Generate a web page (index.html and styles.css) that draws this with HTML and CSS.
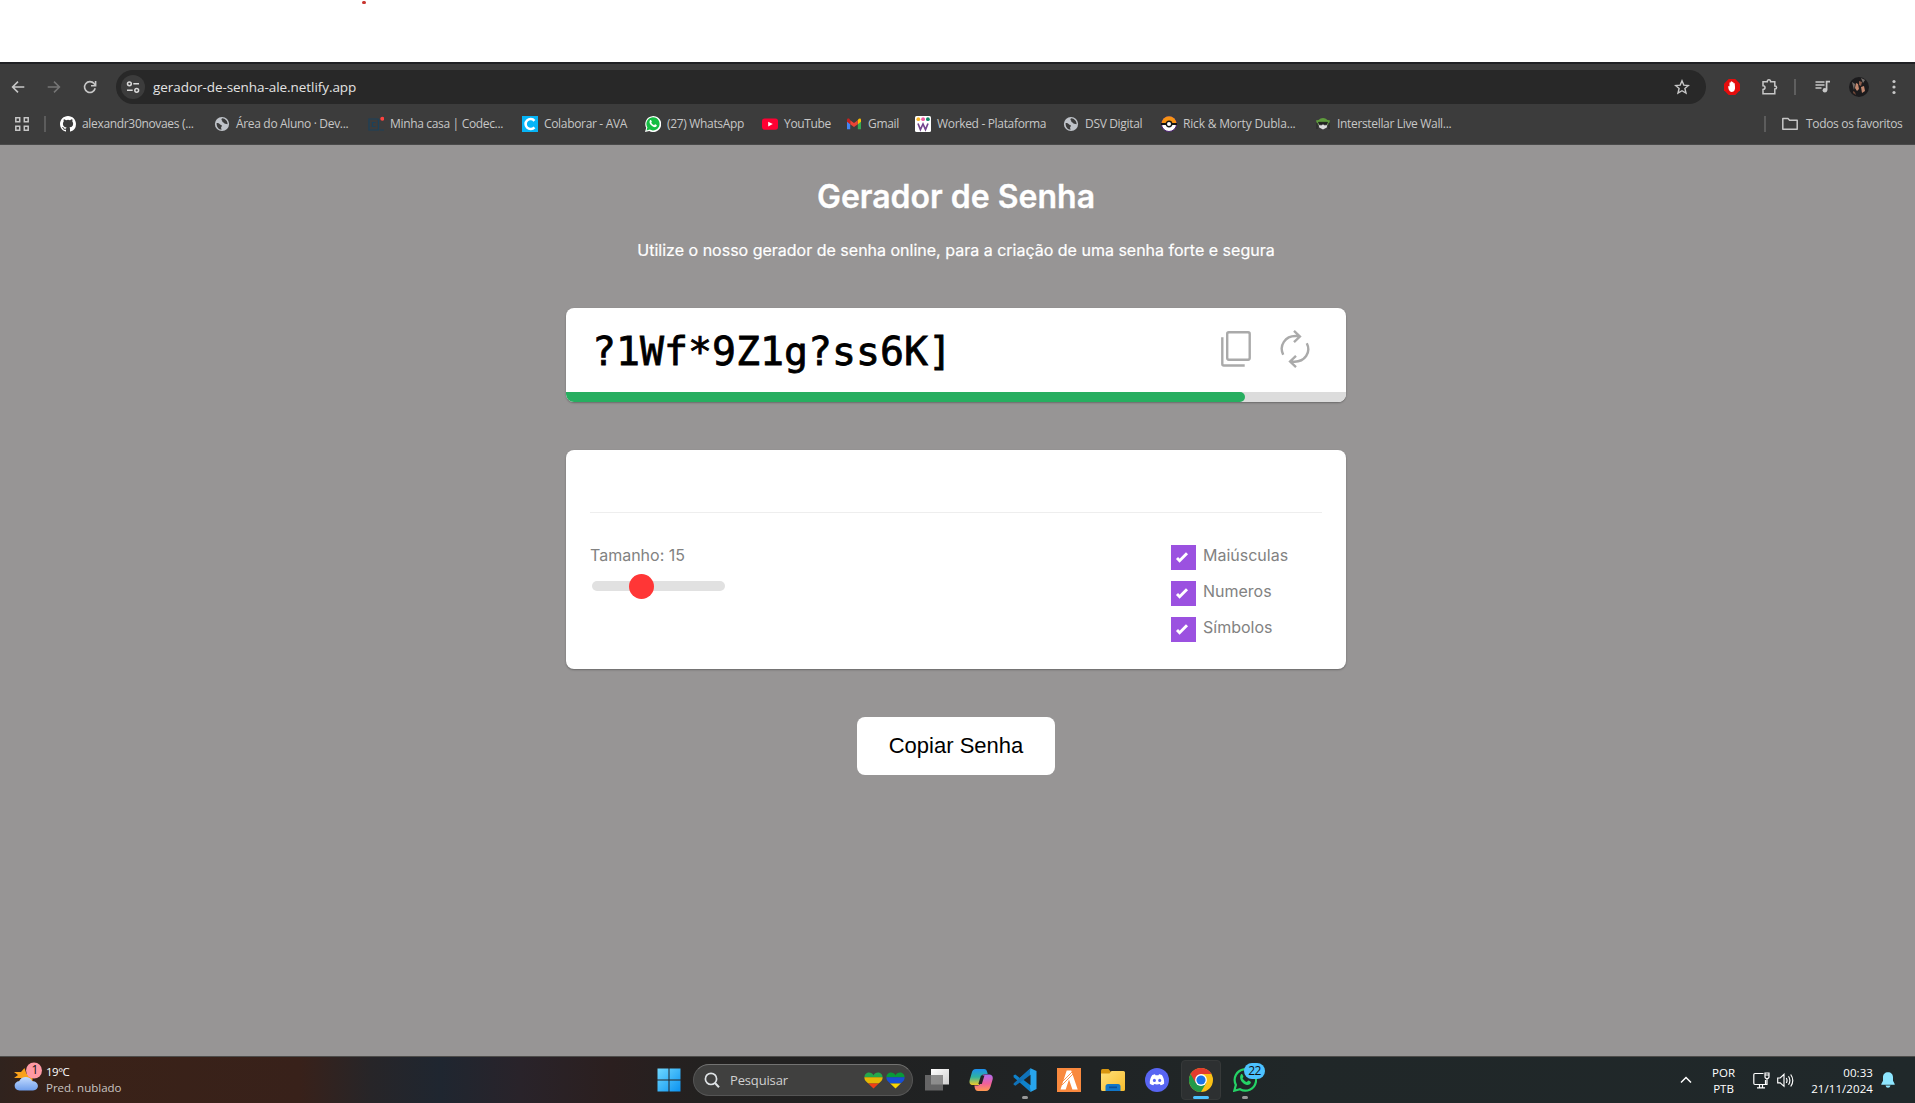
FILE: index.html
```html
<!DOCTYPE html>
<html lang="pt-BR">
<head>
<meta charset="utf-8">
<title>Gerador de Senha</title>
<link rel="stylesheet" href="styles.css">
</head>
<body>
<svg class="defs" aria-hidden="true">
  <defs>
    <linearGradient id="gWin" x1="0" y1="0" x2="1" y2="1"><stop offset="0" stop-color="#6fd8ff"/><stop offset="1" stop-color="#0a92f0"/></linearGradient>
    <linearGradient id="gCloud" x1="0" y1="0" x2="0" y2="1"><stop offset="0" stop-color="#c4dcff"/><stop offset="1" stop-color="#6f9eec"/></linearGradient>
    <linearGradient id="gFolder" x1="0" y1="0" x2="1" y2="1"><stop offset="0" stop-color="#ffe07a"/><stop offset="1" stop-color="#f8bd2c"/></linearGradient>
    <linearGradient id="gCopA" x1="0" y1="0" x2="0" y2="1"><stop offset="0" stop-color="#1c8ff0"/><stop offset=".5" stop-color="#2fb3a0"/><stop offset="1" stop-color="#f0c928"/></linearGradient>
    <linearGradient id="gCopB" x1="0" y1="0" x2="0" y2="1"><stop offset="0" stop-color="#b06cf0"/><stop offset=".55" stop-color="#f0609a"/><stop offset="1" stop-color="#ff9a50"/></linearGradient>
    <linearGradient id="gTask" x1="0" y1="0" x2="1" y2="1"><stop offset="0" stop-color="#ffffff"/><stop offset="1" stop-color="#cfcfcf"/></linearGradient>
    <symbol id="globe" viewBox="0 0 16 16"><circle cx="8" cy="8" r="7.1" fill="#bfc3c9"/><path d="M2.6 6.9c1.6 0 2.7.3 3.3 1.3.6.9 1.9.6 2 1.6.1.9-.9 1-.8 2 .1.8.3 1.3.5 1.9-2.9-.2-5.2-2.7-5-6.8zM8.2 2.3c-.9.7-1 1.8-.2 2.3.7.4-.1 1.4.9 1.7 1.1.3 1.1 1.3 2.3 1.5 1 .1 1.6.3 2.4.4.1-2.9-2.2-5.7-5.4-5.9z" fill="#3c3c3c"/></symbol>
    <clipPath id="heartClip"><path d="M9.500 16.500 1.400 8.700C-.8 5.500.7 1.300 4 .6 6.400.2 8.500 1.300 9.500 3.200 10.500 1.300 12.600.2 15 .6 18.300 1.300 19.800 5.500 17.600 8.700z"/></clipPath>
  </defs>
</svg>

<div class="blank"><span class="mark"></span></div>

<header class="browser">
  <div class="toolbar">
    <svg class="tb-back" width="16" height="16" viewBox="0 0 16 16"><path d="M14.300 8H2.800M8 2.600 2.600 8 8 13.400" fill="none" stroke="#c7c7c7" stroke-width="1.600"/></svg>
    <svg class="tb-fwd" width="16" height="16" viewBox="0 0 16 16"><path d="M1.700 8h11.500M8 2.600 13.400 8 8 13.400" fill="none" stroke="#757575" stroke-width="1.600"/></svg>
    <svg class="tb-reload" width="16" height="16" viewBox="0 0 16 16"><path d="M13.200 9.300A5.400 5.400 0 1 1 12.100 4.600L13.600 6.200" fill="none" stroke="#c7c7c7" stroke-width="1.600"/><path d="M13.600 2v4.700H9" fill="none" stroke="#c7c7c7" stroke-width="1.600"/></svg>
    <div class="omnibox">
      <span class="site-info"><svg width="16" height="16" viewBox="0 0 16 16"><g fill="none" stroke="#d8d8d8" stroke-width="1.500"><circle cx="4.400" cy="4.800" r="1.900"/><path d="M8.300 4.800H14M2 11.300h5.700"/><circle cx="11.700" cy="11.300" r="1.900"/></g></svg></span>
      <span class="url">gerador-de-senha-ale.netlify.app</span>
      <svg class="star" width="16" height="16" viewBox="0 0 16 16"><path d="m8 1.800 1.800 4.300 4.600.4-3.500 3 1.100 4.600L8 11.700l-4 2.400 1.100-4.600-3.500-3 4.600-.4z" fill="none" stroke="#c7c7c7" stroke-width="1.400"/></svg>
    </div>
    <svg class="ext-stop" width="16" height="16" viewBox="0 0 16 16"><path d="M4.700 0h6.600L16 4.700v6.600L11.300 16H4.700L0 11.300V4.700z" fill="#e40d0d"/><path d="M4.200 7.500c0-.8 1.100-.8 1.300 0V3.900c0-.9 1.200-.9 1.200 0v-1c0-1 1.400-1 1.400 0v.5c0-.9 1.300-.9 1.300 0v1.200c0-.8 1.300-.8 1.300 0 .1 2.200.9 5.100-.2 6.700-.7 1.800-3.600 2-4.600.9-1.100-1.200-1.600-2.600-1.700-4.700z" fill="#fff"/></svg>
    <svg class="ext-puzzle" width="18" height="18" viewBox="0 0 18 18"><path d="M2 3.700h4.300c0-2.600 3.300-2.600 3.300 0h4.200V8c2.400 0 2.400 3 0 3v4.700H2v-4.200c2.700 0 2.700-3.800 0-3.800z" fill="none" stroke="#c7c7c7" stroke-width="1.500"/></svg>
    <span class="tb-sep"></span>
    <svg class="media" width="16" height="14" viewBox="0 0 16 14"><path d="M.5 2h9M.5 5h9M.5 8h6" stroke="#c7c7c7" stroke-width="1.500"/><path d="M10.700 1.700H15M11.600 1.500v8.500" stroke="#c7c7c7" stroke-width="1.700"/><circle cx="9.900" cy="10.300" r="2.300" fill="#c7c7c7"/></svg>
    <svg class="avatar" width="20" height="20" viewBox="0 0 20 20"><circle cx="10" cy="10" r="10" fill="#1c1b1d"/><path d="m3 5 3 2-1 6zM12 1l4 2-2 3z" fill="#77706c"/><path d="m7 6 2 1 1 5-2 2-2-3zM12 10l3-1 1 5-3 2z" fill="#c48970"/><path d="m10 4 3 1-1 4-2-1z" fill="#8d5c4a"/><path d="m4 14 2 1 1 3-3-2z" fill="#6a4536"/></svg>
    <svg class="dots" width="4" height="16" viewBox="0 0 4 16"><g fill="#c7c7c7"><circle cx="2" cy="2.500" r="1.600"/><circle cx="2" cy="8" r="1.600"/><circle cx="2" cy="13.500" r="1.600"/></g></svg>
  </div>
  <nav class="bookmarks">
    <svg class="apps" width="14" height="14" viewBox="0 0 14 14"><g fill="none" stroke="#c7c7c7" stroke-width="1.500"><path d="M.8.8h3.900v3.900H.8zM9.300.8h3.900v3.900H9.300zM.8 9.300h3.900v3.900H.8zM9.300 9.300h3.900v3.900H9.300z"/></g></svg>
    <span class="bm-sep"></span>
    <div class="bm-list">
      <a class="bm"><svg width="16" height="16" viewBox="0 0 16 16"><path fill="#fff" d="M8 0C3.580 0 0 3.580 0 8c0 3.540 2.290 6.530 5.470 7.590.4.070.55-.17.55-.38 0-.19-.01-.82-.01-1.490-2.010.37-2.530-.49-2.690-.94-.09-.23-.48-.94-.82-1.130-.28-.15-.68-.52-.01-.53.630-.01 1.080.58 1.230.82.720 1.210 1.870.87 2.330.66.070-.52.280-.87.510-1.070-1.780-.2-3.640-.89-3.640-3.950 0-.87.310-1.590.82-2.150-.08-.2-.36-1.020.08-2.120 0 0 .67-.21 2.200.82a7.500 7.500 0 0 1 4 0c1.530-1.040 2.200-.82 2.200-.82.440 1.100.16 1.920.08 2.120.510.56.820 1.270.82 2.150 0 3.070-1.870 3.750-3.650 3.950.290.250.540.730.540 1.480 0 1.070-.01 1.930-.01 2.200 0 .21.150.46.550.38A8 8 0 0 0 16 8c0-4.420-3.580-8-8-8z"/></svg><span>alexandr30novaes (...</span></a>
      <a class="bm"><svg width="16" height="16"><use href="#globe"/></svg><span>Área do Aluno · Dev...</span></a>
      <a class="bm"><svg width="16" height="16" viewBox="0 0 16 16"><path d="M10.500 3H1v11h9.500V3M7.500 6.500h-3v4h3M12 14h4" fill="none" stroke="#1b415b" stroke-width="1.200"/><circle cx="14.300" cy="2.800" r="2" fill="#ff4340"/></svg><span>Minha casa | Codec...</span></a>
      <a class="bm"><svg width="16" height="16" viewBox="0 0 16 16"><path d="M0 0h16v16H0z" fill="#06b4f6"/><path d="M12.400 4.800a5 5 0 1 0 0 6.500" fill="none" stroke="#fff" stroke-width="2.600"/></svg><span>Colaborar - AVA</span></a>
      <a class="bm"><svg width="16" height="16" viewBox="0 0 16 16"><path d="m0 16 1.200-4.200A8 8 0 1 1 4.300 15z" fill="#fff"/><path d="m1.500 14.500.9-3.100A6.600 6.600 0 1 1 4.700 13.600z" fill="#15bd43"/><path d="M5.100 4.100c.5-.4 1-.2 1.200.3l.5 1.100c.1.400-.4.900-.6 1.200.7 1.200 1.700 2 2.900 2.500l.9-.9c.6.100 1.200.5 1.800.9.200 1.400-1.500 2.100-2.700 1.900C6.700 10.500 3.100 7.100 5.100 4.100z" fill="#fff"/></svg><span>(27) WhatsApp</span></a>
      <a class="bm"><svg width="16" height="16" viewBox="0 0 16 16"><rect y="2.500" width="16" height="11.200" rx="2.600" fill="#ff0033"/><path d="m6.200 5.700 4.600 2.400-4.600 2.400z" fill="#fff"/></svg><span>YouTube</span></a>
      <a class="bm"><svg width="16" height="16" viewBox="0 0 16 16"><path d="M1 5v8.300h3.200V7.500z" fill="#4285f4"/><path d="M15 5v8.300h-3.200V7.500z" fill="#34a853"/><path d="M11.800 4.200v4L15 5.800V4c0-1.500-1.600-1.800-2.500-.9z" fill="#fbbc04"/><path d="M4.200 8.200v-4L8 7l3.800-2.800v4L8 11z" fill="#ea4335"/><path d="M1 4v1.800l3.200 2.400v-4L3.500 3.100C2.600 2.200 1 2.600 1 4z" fill="#c5221f"/></svg><span>Gmail</span></a>
      <a class="bm"><svg width="16" height="16" viewBox="0 0 16 16"><rect width="16" height="16" rx="1.500" fill="#fff"/><circle cx="3.300" cy="3.200" r="1.900" fill="#f8b62a"/><circle cx="8.100" cy="3.200" r="1.900" fill="#ee5aa0"/><circle cx="12.900" cy="3.200" r="1.900" fill="#138765"/><path d="m3 7.500 2.400 6L8 8l2.500 5.500 2.500-6" fill="none" stroke="#73458e" stroke-width="1.700"/></svg><span>Worked - Plataforma</span></a>
      <a class="bm"><svg width="16" height="16"><use href="#globe"/></svg><span>DSV Digital</span></a>
      <a class="bm wide"><svg width="16" height="16" viewBox="0 0 16 16"><circle cx="8" cy="8" r="7.500" fill="#fff" stroke="#4e2275"/><path d="M.5 7.800a7.500 7.500 0 0 1 15 0z" fill="#f79213"/><path d="M0 7h16v2H0z" fill="#151515"/><circle cx="8" cy="8" r="2.700" fill="#fff" stroke="#151515" stroke-width="1.400"/></svg><span>Rick &amp; Morty Dubla...</span></a>
      <a class="bm"><svg width="16" height="16" viewBox="0 0 16 16"><path d="M.8 4.500 3.500 4C6 1.200 10 1.200 12.500 4l2.700.5-2 4.500H3z" fill="#5e9b3c"/><path d="M3.500 7h9l-.7 4.500L8 13.500l-3.800-2z" fill="#ddd"/><path d="M3.500 6.300h9l-.8 2.500H9L8 7.700 7 8.800H4.300zM2 7v6M14 7v6" fill="#202020" stroke="#202020" stroke-width=".8"/></svg><span>Interstellar Live Wall...</span></a>
    </div>
    <span class="bm-sep end"></span>
    <a class="bm all"><svg width="16" height="16" viewBox="0 0 16 16"><path d="M.8 12.500v-10H6l1.600 1.700h7.600v9H.8z" fill="none" stroke="#c7c7c7" stroke-width="1.500" stroke-linejoin="round"/></svg><span>Todos os favoritos</span></a>
  </nav>
</header>

<main class="page">
  <h1>Gerador de Senha</h1>
  <p class="lead">Utilize o nosso gerador de senha online, para a criação de uma senha forte e segura</p>
  <section class="card password">
    <div class="password-row">
      <span class="password-text">?1Wf*9Z1g?ss6K]</span>
      <svg class="copy-icon" width="30" height="36" viewBox="0 0 30 36"><g fill="none" stroke="#aaa" stroke-width="2.400"><rect x="6.200" y="1.300" width="22.500" height="27.400" rx="1.600"/><path d="M1.300 6.200V33q0 1.500 1.500 1.500H23.700"/></g></svg>
      <svg class="renew-icon" width="30" height="38" viewBox="0 0 30 38"><g fill="none" stroke="#aaa" stroke-width="2.400"><path d="M3.200 24.700C-1.400 15.300 5.500 6 15.400 6h4.500M14 .9 19.900 6.500 14 12.200M26.800 13.300C31.400 22.700 24.500 31.700 14.600 31.700h-4.500M16 25.800l-5.900 5.700L16 37.100"/></g></svg>
    </div>
    <div class="meter"><div class="meter-fill" style="width:87%"></div></div>
  </section>
  <section class="card options">
    <div class="options-head"></div>
    <div class="options-body">
      <div class="size">
        <label>Tamanho: 15</label>
        <div class="slider"><span class="thumb"></span></div>
      </div>
      <div class="checks">
        <label class="check"><span class="box"><svg width="14" height="12" viewBox="0 0 14 12"><path d="m2 7 2.600 2.700L12 2.200" fill="none" stroke="#fff" stroke-width="2.900"/></svg></span>Maiúsculas</label>
        <label class="check"><span class="box"><svg width="14" height="12" viewBox="0 0 14 12"><path d="m2 7 2.600 2.700L12 2.200" fill="none" stroke="#fff" stroke-width="2.900"/></svg></span>Numeros</label>
        <label class="check"><span class="box"><svg width="14" height="12" viewBox="0 0 14 12"><path d="m2 7 2.600 2.700L12 2.200" fill="none" stroke="#fff" stroke-width="2.900"/></svg></span>Símbolos</label>
      </div>
    </div>
  </section>
  <button class="copy">Copiar Senha</button>
</main>

<footer class="taskbar">
  <div class="weather">
    <svg width="30" height="32" viewBox="0 0 30 32"><path d="m10.500 6 2 6 6-3v10H5l3-3-8 0 4-3-4-3 7 0z" fill="#f9a11b"/><path d="M5.500 28.500C-1 28-1 19.500 5.500 19 7 13.500 16.500 13.500 18 19c7.500.5 8 9 1 9.500z" fill="url(#gCloud)"/><circle cx="20" cy="8.500" r="8" fill="#ff99a4"/></svg>
    <span class="badge one">1</span>
    <div class="weather-text"><span class="temp">19°C</span><span class="cond">Pred. nublado</span></div>
  </div>
  <div class="tasks">
    <svg class="start" width="24" height="24" viewBox="0 0 24 24"><path d="M.5.500h11v11H.5zM12.500.5h11v11h-11zM.5 12.500h11v11H.5zM12.500 12.500h11v11h-11z" fill="url(#gWin)"/></svg>
    <div class="search">
      <svg width="16" height="16" viewBox="0 0 16 16"><circle cx="7" cy="6.900" r="5.600" fill="none" stroke="#dfe3e6" stroke-width="1.700"/><path d="m11 11 4 4.200" stroke="#dfe3e6" stroke-width="2"/></svg>
      <span>Pesquisar</span>
      <svg class="heart" width="19" height="17" viewBox="0 0 19 17"><g clip-path="url(#heartClip)"><path d="M0 0h19v5.200H0z" fill="#25a84c"/><path d="M0 5.200h19v6.200H0z" fill="#e4b704"/><path d="M0 11.400h19V17H0z" fill="#f03e16"/></g></svg>
      <svg class="heart" width="19" height="17" viewBox="0 0 19 17"><g clip-path="url(#heartClip)"><path d="M0 0h19v5.200H0z" fill="#089a3a"/><path d="M0 5.200h19v6.200H0z" fill="#174fd4"/><path d="M0 11.400h19V17H0z" fill="#fbd600"/></g></svg>
    </div>
    <div class="task"><svg width="24" height="24" viewBox="0 0 24 24"><path d="M6 1h18v15.500H6z" fill="url(#gTask)"/><path d="M0 7h18v15.500H0z" fill="#777" fill-opacity=".8"/></svg></div>
    <div class="task"><svg width="24" height="24" viewBox="0 0 24 24"><path d="M7 1h8c2 0 2.600 1 3.200 3l.5 2h-3c-2 0-2.700 1-3.200 3L10 17H4c-3 0-4-2-3.300-5l2-7C3.400 2.500 4.500 1 7 1z" fill="url(#gCopA)"/><path d="M17 23H9c-2 0-2.600-1-3.200-3l-.4-2.500h3c2 0 2.700-1 3.200-3L14 6.500h6c3 0 4.300 2 3.600 5l-2 7c-.7 2.500-2.100 4.500-4.600 4.500z" fill="url(#gCopB)"/><path d="M12 7.500h3.500l-2.700 8.500H9.300z" fill="#202324"/></svg></div>
    <div class="task active"><svg width="24" height="24" viewBox="0 0 24 24"><path d="M17.500.2 6.800 9.900 2.300 6.500.6 7.300v2L17.500 23.900z" fill="#0f82ca"/><path d="M.6 15.400 17.500.2v6.500L2.400 17.700.6 16.700z" fill="#1072b9"/><path d="m17.500.2 6 2.700v18.200l-6 2.800-.6-4.500V4z" fill="#27a5ee"/><path d="m17.500 6.700-6.900 5.300 6.900 5.300z" fill="#202324"/></svg></div>
    <div class="task"><svg width="24" height="24" viewBox="0 0 24 24"><path d="M0 0h24v24H0z" fill="#f9893e"/><path d="M9.700 2.500h4.500l6.500 19h-5.300l-3.400-10-3.300 10H3.500zM3 22 12 8" fill="#fff"/><path d="m6 13 9-9M5 17l11-11" stroke="#f9893e" stroke-width=".9"/></svg></div>
    <div class="task"><svg width="24" height="24" viewBox="0 0 24 24"><path d="M0 2.500Q0 1 1.500 1h6L10 4v4H0z" fill="#d89610"/><path d="M0 5.500h8.500L10.500 3H22.500Q24 3 24 4.500V21.500Q24 23 22.500 23h-21Q0 23 0 21.500z" fill="url(#gFolder)"/><path d="M4.500 23v-4.500q0-2.500 2.500-2.500h10q2.500 0 2.500 2.500V23z" fill="#1076c8"/><path d="M8 18.500h8v1.700H8z" fill="#0b4f98"/></svg></div>
    <div class="task"><svg width="24" height="24" viewBox="0 0 24 24"><circle cx="12" cy="12" r="12" fill="#5865f2"/><path d="M7.300 7.100C8.600 6.500 9.700 6.300 10 6.300l.5.900h3l.5-.9c.5 0 1.800.3 2.900.8 1.700 2.600 2.500 5.400 2.200 8.600-1.200.9-2.400 1.400-3.400 1.600l-.9-1.300c-1.900.5-3.700.5-5.600 0l-.9 1.300c-1-.2-2.300-.7-3.500-1.600-.3-3 .600-6 2.500-8.600z" fill="#fff"/><ellipse cx="9.400" cy="12.400" rx="1.500" ry="1.700" fill="#5865f2"/><ellipse cx="14.700" cy="12.400" rx="1.500" ry="1.700" fill="#5865f2"/></svg></div>
    <div class="task focused"><svg width="24" height="24" viewBox="0 0 24 24"><circle cx="12" cy="12" r="12" fill="#fbc116"/><path d="M12 12 1.600 6A12 12 0 0 0 12 24l5.200-9z" fill="#229a48"/><path d="M1.600 6A12 12 0 0 1 22.400 6H12l-5.200 9z" fill="#e33b2e"/><circle cx="12" cy="12" r="5.900" fill="#fff"/><circle cx="12" cy="12" r="4.600" fill="#1a73e8"/></svg></div>
    <div class="task active"><svg width="24" height="24" viewBox="0 0 24 24"><path d="m1.300 22.700 1.600-5.800A10.700 10.700 0 1 1 7 21.200z" fill="none" stroke="#25d366" stroke-width="2.200"/><path d="M8 6.300c.7-.5 1.300-.2 1.600.4l.8 1.700c.2.600-.5 1.300-.9 1.800 1.100 1.900 2.500 3 4.300 3.900l1.500-1.500c.9.200 1.800.8 2.600 1.400.2 2.100-2.200 3.300-4 3C10 16.300 5 11.200 8 6.300z" fill="#25d366"/></svg><span class="badge wa">22</span></div>
  </div>
  <div class="tray">
    <svg class="chev" width="12" height="8" viewBox="0 0 12 8"><path d="m1 6.500 5-5 5 5" fill="none" stroke="#fff" stroke-width="1.500"/></svg>
    <div class="lang"><span>POR</span><span>PTB</span></div>
    <svg class="net" width="17" height="17" viewBox="0 0 17 17"><g fill="none" stroke="#fff" stroke-width="1.200"><path d="M10.500 1.500H2q-1.200 0-1.200 1.200v8.600q0 1.200 1.200 1.200h10.500V8M4 15.800h8M6.500 12.500v3M9.500 12.500v3M12 1h4v3.700q0 1.800-2 1.800t-2-1.800zM14 6.500v6h-2M12 3h4"/></g></svg>
    <svg class="vol" width="17" height="15" viewBox="0 0 17 15"><path d="M.7 5h2.500L7 1.300v12L3.200 9.800H.7zM9.300 5q1.500 2.500 0 5M11.500 3.300q2.800 4.200 0 8.400M13.700 1.500q4.200 6 0 12" fill="none" stroke="#fff" stroke-width="1.150"/></svg>
    <div class="clock"><span>00:33</span><span>21/11/2024</span></div>
    <svg class="bell" width="14" height="16" viewBox="0 0 14 16"><path d="M7 .3c3 0 5 2 5 5v3.500L13.700 12v.7H.3V12L2 8.800V5.300c0-3 2-5 5-5zM4.500 13.500h5Q9 15.700 7 15.700t-2.500-2.200z" fill="#8ee6ff"/></svg>
  </div>
</footer>
</body>
</html>
```
FILE: styles.css
```css
* { box-sizing: border-box; }
body {
  margin: 0;
  width: 1915px;
  height: 1103px;
  overflow: hidden;
  display: flex;
  flex-direction: column;
  background: #fff;
  font-family: "Open Sans", "Noto Sans", sans-serif;
}
svg { display: block; flex: none; }
.defs { position: absolute; width: 0; height: 0; }

.blank { height: 62px; flex: none; padding: 1px 0 0 362px; }
.mark { display: block; width: 4px; height: 3px; border-radius: 2px; background: #c8342f; }

/* browser chrome */
.browser { flex: none; height: 83px; background: #3c3c3c; border-top: 2px solid #202124; border-bottom: 1px solid #4a4a4a; }
.toolbar { height: 46px; display: flex; align-items: center; padding-left: 10px; }
.tb-fwd { margin-left: 20px; }
.tb-reload { margin-left: 20px; }
.omnibox { margin-left: 18px; width: 1590px; height: 34px; border-radius: 17px; background: #282828; display: flex; align-items: center; padding-left: 5px; }
.site-info { width: 24px; height: 24px; border-radius: 50%; background: #3c3c3c; display: grid; place-items: center; }
.url { margin-left: 8px; font-size: 13.500px; letter-spacing: -0.060px; color: #e3e3e3; white-space: nowrap; line-height: 20px; }
.star { margin-left: auto; margin-right: 16px; }
.ext-stop { margin-left: 18px; }
.ext-puzzle { margin-left: 21px; }
.tb-sep { width: 2px; height: 16px; background: #5f5f5f; margin-left: 15px; }
.media { margin-left: 19px; }
.avatar { margin-left: 18px; }
.dots { margin-left: 23px; }

.bookmarks { height: 28px; display: flex; align-items: center; padding-left: 15px; padding-right: 12px; }
.bm-sep { width: 2px; height: 16px; background: #5c5c5c; margin-left: 15px; flex: none; }
.bm-list { margin-left: 14px; display: grid; grid-template-columns: 154px 154px 154px 123px 117px 84px 69px 148px 98px 154px 154px; }
.bm { display: flex; align-items: center; gap: 6px; white-space: nowrap; font-size: 12px; line-height: 16px; letter-spacing: -0.330px; color: #c7c7c7; }
.bm.wide { letter-spacing: -0.180px; }
.bm-sep.end { margin-left: auto; }
.bm.all { margin-left: 16px; gap: 8px; width: 121px; }

/* generator page */
.page { flex: 1; background: #979595; display: flex; flex-direction: column; align-items: center; padding-right: 3px; font-family: Inter, sans-serif; color: #fff; }
h1 { margin: 32px 0 0; font-size: 32px; font-weight: 600; line-height: 39px; -webkit-text-stroke: .3px #fff; }
.lead { margin: 24px 0 0; font-size: 16px; font-weight: 400; line-height: 20px; -webkit-text-stroke: .2px #fff; }
.card { width: 780px; border-radius: 8px; background: #fff; box-shadow: 0 1px 2px rgba(0, 0, 0, .3); }
.password { margin-top: 48px; height: 94px; overflow: hidden; }
.password-row { height: 84px; display: flex; align-items: center; padding: 0 36px 0 26px; }
.password-text { font-family: "DejaVu Sans Mono", monospace; font-size: 39.860px; line-height: 48px; color: #000; -webkit-text-stroke: .8px #000; padding-top: 2px; white-space: nowrap; }
.copy-icon { margin-left: auto; margin-bottom: 2px; }
.renew-icon { margin-left: 29px; margin-bottom: 2px; }
.meter { height: 10px; background: #dcdcdc; }
.meter-fill { height: 10px; background: #27ae60; border-radius: 0 5px 5px 0; }

.options { margin-top: 48px; height: 219px; padding: 0 24px; }
.options-head { height: 63px; border-bottom: 1px solid #eee; }
.options-body { display: flex; justify-content: space-between; padding-top: 32px; color: #828282; font-size: 16px; line-height: 20px; }
.slider { margin: 16px 0 0 2px; width: 133px; height: 10px; border-radius: 5px; background: #e1e1e1; display: flex; align-items: center; padding-left: 37px; }
.thumb { width: 25px; height: 25px; border-radius: 50%; background: #ff3636; flex: none; }
.checks { width: 151px; display: grid; gap: 11px; }
.check { display: flex; height: 25px; gap: 7px; }
.box { width: 25px; height: 25px; background: #9b51e0; display: grid; place-items: center; padding: 0 3px 1px 0; }

.copy { margin-top: 48px; height: 58px; padding: 0 32px; border: 0; border-radius: 8px; background: #fff; color: #000; font: 22px "Liberation Sans", Arial, sans-serif; }

/* taskbar */
.taskbar {
  flex: none; height: 47px; display: flex; align-items: center; position: relative;
  border-top: 1px solid #4d4c4a;
  background: linear-gradient(90deg, #30231e 0, #3a2218 70px, #38211a 300px, #272528 370px, #1f2630 440px, #29232a 520px, #2b1f1f 610px, #232120 700px, #202223 950px, #202728 1300px, #20282a 1915px);
}
.weather { width: 657px; height: 46px; display: flex; padding-left: 14px; position: relative; color: #fff; }
.weather > svg { margin-top: 5px; }
.badge { position: absolute; font-size: 12px; line-height: 16px; color: #111; text-align: center; }
.badge.one { left: 27px; top: 5px; width: 16px; }
.weather-text { display: flex; flex-direction: column; margin: 7px 0 0 2px; font-size: 11.500px; line-height: 16px; }
.temp { letter-spacing: -.5px; }
.cond { color: #c9c4c2; }
.tasks { display: flex; align-items: center; height: 46px; }
.search { margin-left: 12px; margin-right: 2px; width: 220px; height: 32px; border-radius: 16px; background: #40403f; border: 1px solid #555; border-top-color: #737372; display: flex; align-items: center; padding: 0 7px 0 10px; color: #d0d0d0; font-size: 13px; letter-spacing: -.15px; }
.search > span { margin-left: 10px; margin-right: auto; }
.heart { margin-left: 3px; }
.task { width: 40px; height: 40px; margin: 0 2px; border-radius: 4px; display: grid; place-items: center; position: relative; }
.task::after { position: absolute; bottom: 1px; height: 3px; border-radius: 2px; }
.active::after { content: ""; left: 17px; width: 6px; background: #999; }
.focused { background: #2d3031; border: 1px solid #363939; }
.focused::after { content: ""; left: 11px; bottom: 0; width: 16px; background: #4cc2ff; }
.badge.wa { left: 19px; top: 3px; width: 21px; height: 16px; border-radius: 8px; background: #4cc2ff; letter-spacing: -.5px; }
.tray { margin-left: auto; display: flex; align-items: center; height: 46px; padding-right: 20px; color: #fff; font-size: 11.500px; line-height: 16px; }
.lang, .clock { display: flex; flex-direction: column; padding-top: 1px; }
.lang { margin-left: 20px; width: 23px; align-items: center; }
.net { margin-left: 18px; }
.vol { margin-left: 7px; }
.clock { margin-left: 16px; width: 63px; align-items: flex-end; letter-spacing: .08px; }
.bell { margin-left: 8px; }
```
